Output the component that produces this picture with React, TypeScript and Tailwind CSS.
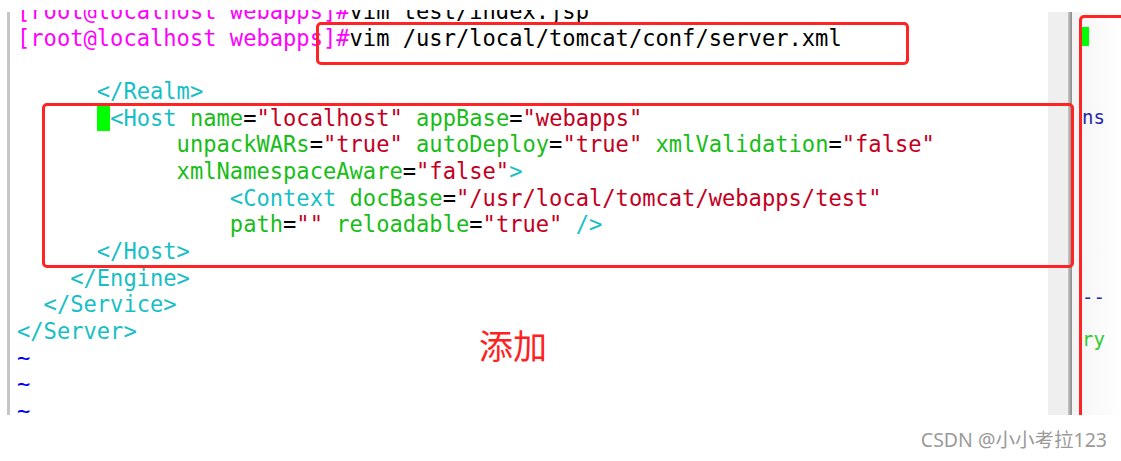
type Seg = [string, string];

const color: Record<string, string> = {
  p: 'text-[#ff00ff]',
  k: 'text-black',
  t: 'text-[#17bfc4]',
  a: 'text-[#18bd18]',
  v: 'text-[#c4001e]',
  n: 'text-[#0000ff]',
  c: 'bg-[#00ff00]',
};

const lines: Seg[][] = [
  [['[root@localhost webapps]#', 'p'], ['vim test/index.jsp', 'k']],
  [['[root@localhost webapps]#', 'p'], ['vim /usr/local/tomcat/conf/server.xml', 'k']],
  [],
  [['      </Realm>', 't']],
  [
    ['      ', 'k'],
    [' ', 'c'],
    ['<Host', 't'],
    [' name', 'a'],
    ['=', 'k'],
    ['"localhost"', 'v'],
    [' appBase', 'a'],
    ['=', 'k'],
    ['"webapps"', 'v'],
  ],
  [
    ['            unpackWARs', 'a'],
    ['=', 'k'],
    ['"true"', 'v'],
    [' autoDeploy', 'a'],
    ['=', 'k'],
    ['"true"', 'v'],
    [' xmlValidation', 'a'],
    ['=', 'k'],
    ['"false"', 'v'],
  ],
  [
    ['            xmlNamespaceAware', 'a'],
    ['=', 'k'],
    ['"false"', 'v'],
    ['>', 't'],
  ],
  [
    ['                <Context', 't'],
    [' docBase', 'a'],
    ['=', 'k'],
    ['"/usr/local/tomcat/webapps/test"', 'v'],
  ],
  [
    ['                path', 'a'],
    ['=', 'k'],
    ['""', 'v'],
    [' reloadable', 'a'],
    ['=', 'k'],
    ['"true"', 'v'],
    [' />', 't'],
  ],
  [['      </Host>', 't']],
  [['    </Engine>', 't']],
  [['  </Service>', 't']],
  [['</Server>', 't']],
  [['~', 'n']],
  [['~', 'n']],
  [['~', 'n']],
];

export default function App() {
  return (
    <div className="relative h-[461px] w-[1121px] overflow-hidden bg-white pt-[10px]">
      {/* terminal capture, its top row is cut by the crop */}
      <div className="relative flex h-[405px] overflow-hidden">
        <div className="flex w-[10px] justify-end pt-[2px]">
          <div className="h-full w-[3px] bg-[#c6c6c6]" />
        </div>

        <div className="-mt-[12px] w-[1038px] pl-[7px] font-['DejaVu_Sans_Mono',monospace] text-[22.1px]">
          {lines.map((line, i) => (
            <div key={i} className="h-[26.67px] whitespace-pre leading-[26.67px]">
              {line.map(([text, c], j) => (
                <span key={j} className={color[c]}>
                  {text}
                </span>
              ))}
            </div>
          ))}
        </div>

        {/* scrollbar */}
        <div className="mt-[2px] w-[20px] bg-[#efefef]" />
        <div className="mt-[2px] w-[4px] bg-gradient-to-r from-[#c8c8c8] to-[#8a8a8a]" />

        {/* neighbouring window, cut off */}
        <div className="mt-[2px] flex flex-1 flex-col bg-gradient-to-r from-[#f4f4f4] to-white pl-[10px] font-['DejaVu_Sans_Mono',monospace] text-[19px] leading-[20px]">
          <div className="mt-[15px] h-[19px] w-[7px] bg-[#00ff00]" />
          <div className="mt-[61px] whitespace-pre text-[#2a2aa8]">ns</div>
          <div className="mt-[160px] whitespace-pre text-[#2a2aa8]">--</div>
          <div className="mt-[22px] whitespace-pre text-[#2ccc2c]">ry</div>
        </div>

        {/* red markup */}
        <div className="absolute left-[316px] top-[12px] h-[43px] w-[593px] rounded-[5px] border-[3px] border-[#ff2323]" />
        <div className="absolute left-[42px] top-[93px] h-[165px] w-[1032px] rounded-[5px] border-[3px] border-[#ff2323]" />
        <div className="absolute left-[1079px] top-[5px] h-[500px] w-[100px] rounded-[5px] border-[3px] border-[#ff2323]" />
        <div className="absolute left-[479px] top-[318px] font-['Noto_Sans_CJK_SC',sans-serif] text-[34px] leading-[34px] text-[#ff2020]">
          添加
        </div>
      </div>

      <div className="flex justify-end pr-[14px] pt-[12px]">
        <span className="font-['Noto_Sans','Noto_Sans_CJK_SC',sans-serif] text-[19.5px] leading-[26px] text-[#9a9a9a]">
          CSDN @小小考拉123
        </span>
      </div>
    </div>
  );
}
